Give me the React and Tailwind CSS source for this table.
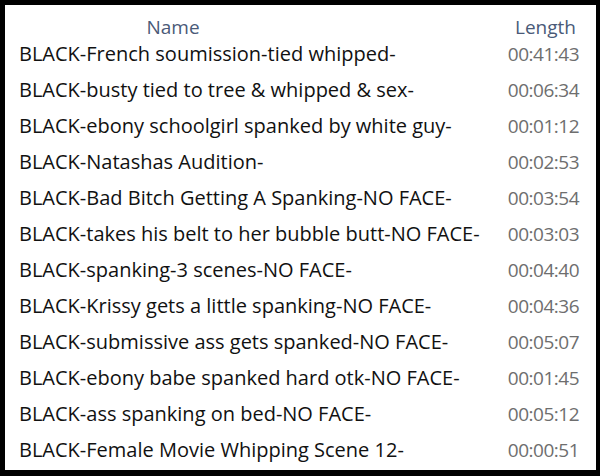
const rows = [
  ['BLACK-French soumission-tied whipped-', '00:41:43'],
  ['BLACK-busty tied to tree & whipped & sex-', '00:06:34'],
  ['BLACK-ebony schoolgirl spanked by white guy-', '00:01:12'],
  ['BLACK-Natashas Audition-', '00:02:53'],
  ['BLACK-Bad Bitch Getting A Spanking-NO FACE-', '00:03:54'],
  ['BLACK-takes his belt to her bubble butt-NO FACE-', '00:03:03'],
  ['BLACK-spanking-3 scenes-NO FACE-', '00:04:40'],
  ['BLACK-Krissy gets a little spanking-NO FACE-', '00:04:36'],
  ['BLACK-submissive ass gets spanked-NO FACE-', '00:05:07'],
  ['BLACK-ebony babe spanked hard otk-NO FACE-', '00:01:45'],
  ['BLACK-ass spanking on bed-NO FACE-', '00:05:12'],
  ['BLACK-Female Movie Whipping Scene 12-', '00:00:51'],
];

export default function App() {
  return (
    <div className="w-[600px] h-[476px] bg-black p-[5px] pr-[4px] pb-[6px] font-['Open_Sans',sans-serif]">
      <div className="h-full bg-white pl-[14px] pr-[17px] pt-[11px]">
        <div className="flex text-[19px] leading-[22px] text-[#4a5a78] pr-[3px]">
          <div className="flex-1 text-center pr-[265px] pl-[80px]">Name</div>
          <div className="w-[64px] text-right">Length</div>
        </div>
        <div className="flex flex-col mt-[-2px]">
          {rows.map(([name, len]) => (
            <div key={name} className="flex items-center h-[36px]">
              <div className="flex-1 text-[20px] text-[#111]">{name}</div>
              <div className="text-[19px] text-[#6e6e6e] tracking-[-0.5px]">{len}</div>
            </div>
          ))}
        </div>
      </div>
    </div>
  );
}
